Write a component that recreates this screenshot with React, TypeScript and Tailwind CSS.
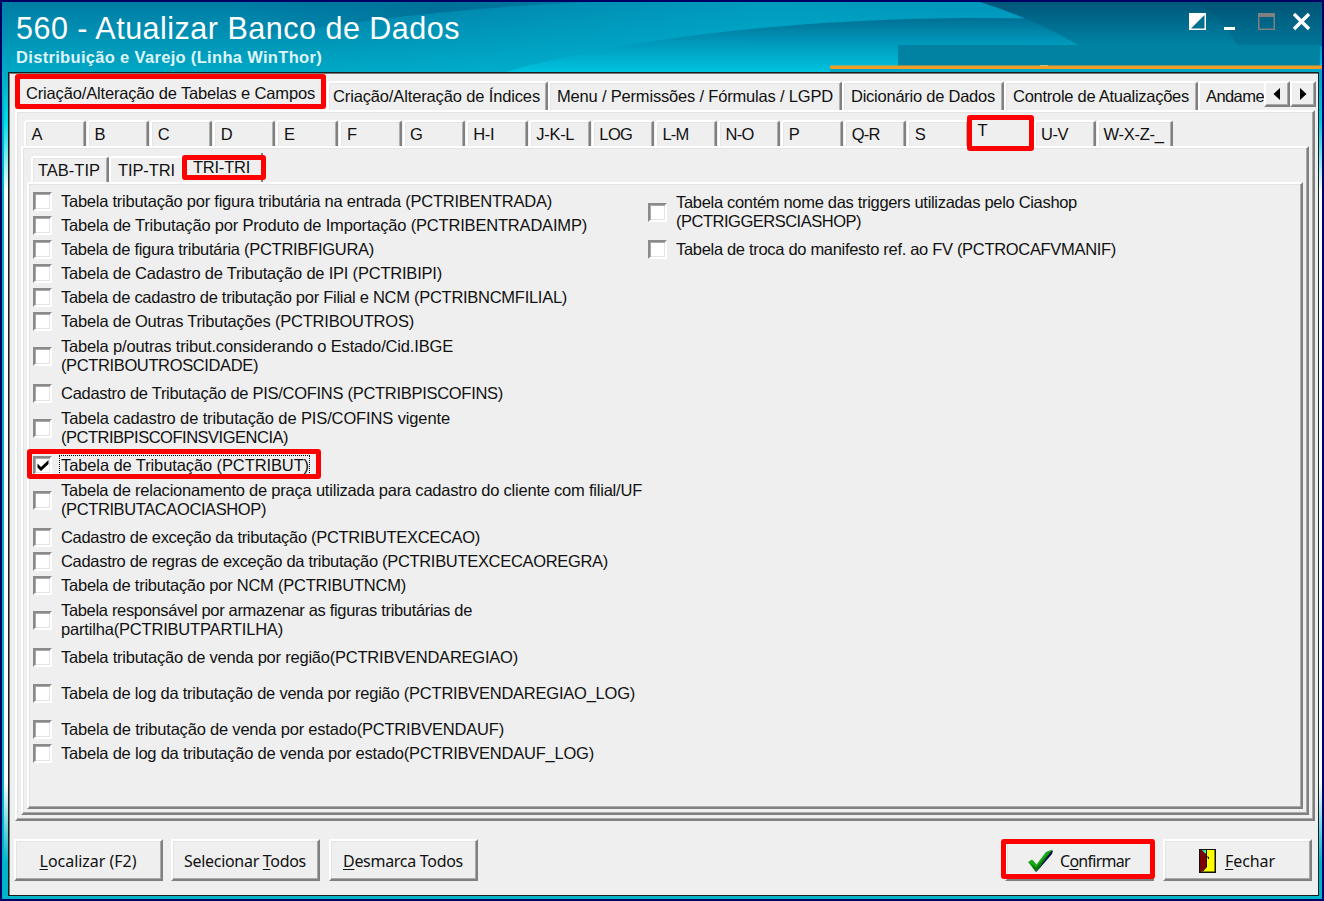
import { useLayoutEffect, useRef, useState, type ReactNode } from "react";

// Spreads a label over an exact width by adjusting its letter spacing.
const Label = ({ text, width, hot }: { text: string; width: number; hot?: number }) => {
  const ref = useRef<HTMLSpanElement>(null);
  const [spacing, setSpacing] = useState(0);

  useLayoutEffect(() => {
    if (ref.current && spacing === 0) {
      setSpacing((width - ref.current.getBoundingClientRect().width) / text.length);
    }
  }, [text, width, spacing]);

  return (
    <span ref={ref} className="inline-block whitespace-pre" style={{ letterSpacing: spacing }}>
      {hot === undefined ? (
        text
      ) : (
        <>
          {text.slice(0, hot)}
          <u className="underline decoration-1 underline-offset-2">{text[hot]}</u>
          {text.slice(hot + 1)}
        </>
      )}
    </span>
  );
};

const Highlight = ({ className }: { className: string }) => (
  <div className={`pointer-events-none absolute z-10 rounded-[3px] border-5 border-[#ff0000] ${className}`} />
);

interface TabItem {
  text: string;
  width: number;
  box: string;
}

const mainTabs: TabItem[] = [
  { text: "Criação/Alteração de Índices", width: 207, box: "w-[221px] pl-[4px]" },
  { text: "Menu / Permissões / Fórmulas / LGPD", width: 276, box: "w-[294px] pl-[7px]" },
  { text: "Dicionário de Dados", width: 144, box: "w-[162px] pl-[7px]" },
  { text: "Controle de Atualizações", width: 176, box: "w-[194px] pl-[7px]" },
];

const letterTabs: [string, number][] = [
  ["A", 11],
  ["B", 9],
  ["C", 10],
  ["D", 11],
  ["E", 9],
  ["F", 9],
  ["G", 11],
  ["H-I", 21],
  ["J-K-L", 38],
  ["LOG", 33],
  ["L-M", 26],
  ["N-O", 28],
  ["P", 11],
  ["Q-R", 28],
  ["S", 10],
  ["T", 9],
  ["U-V", 27],
];

interface Row {
  lines: [string, number][];
  tall?: boolean;
  checked?: boolean;
}

const leftRows: Row[] = [
  { lines: [["Tabela tributação por figura tributária na entrada (PCTRIBENTRADA)", 491]] },
  { lines: [["Tabela de Tributação por Produto de Importação (PCTRIBENTRADAIMP)", 526]] },
  { lines: [["Tabela de figura tributária (PCTRIBFIGURA)", 313]] },
  { lines: [["Tabela de Cadastro de Tributação de IPI (PCTRIBIPI)", 381]] },
  { lines: [["Tabela de cadastro de tributação por Filial e NCM (PCTRIBNCMFILIAL)", 506]] },
  { lines: [["Tabela de Outras Tributações (PCTRIBOUTROS)", 353]] },
  {
    lines: [
      ["Tabela p/outras tribut.considerando o Estado/Cid.IBGE", 392],
      ["(PCTRIBOUTROSCIDADE)", 197],
    ],
  },
  { lines: [["Cadastro de Tributação de PIS/COFINS (PCTRIBPISCOFINS)", 442]] },
  {
    lines: [
      ["Tabela cadastro de tributação de PIS/COFINS vigente", 389],
      ["(PCTRIBPISCOFINSVIGENCIA)", 227],
    ],
  },
  { lines: [["Tabela de Tributação (PCTRIBUT)", 248]], checked: true },
  {
    lines: [
      ["Tabela de relacionamento de praça utilizada para cadastro do cliente com filial/UF", 581],
      ["(PCTRIBUTACAOCIASHOP)", 205],
    ],
  },
  { lines: [["Cadastro de exceção da tributação (PCTRIBUTEXCECAO)", 419]] },
  { lines: [["Cadastro de regras de exceção da tributação (PCTRIBUTEXCECAOREGRA)", 547]] },
  { lines: [["Tabela de tributação por NCM (PCTRIBUTNCM)", 345]] },
  {
    lines: [
      ["Tabela responsável por armazenar as figuras tributárias de", 411],
      ["partilha(PCTRIBUTPARTILHA)", 222],
    ],
  },
  { lines: [["Tabela tributação de venda por região(PCTRIBVENDAREGIAO)", 457]] },
  { lines: [["Tabela de log da tributação de venda por região (PCTRIBVENDAREGIAO_LOG)", 574]], tall: true },
  { lines: [["Tabela de tributação de venda por estado(PCTRIBVENDAUF)", 443]] },
  { lines: [["Tabela de log da tributação de venda por estado(PCTRIBVENDAUF_LOG)", 533]] },
];

const rightRows: Row[] = [
  {
    lines: [
      ["Tabela contém nome das triggers utilizadas pelo Ciashop", 401],
      ["(PCTRIGGERSCIASHOP)", 185],
    ],
  },
  { lines: [["Tabela de troca do manifesto ref. ao FV (PCTROCAFVMANIF)", 440]] },
];

const raisedTab =
  "shrink-0 rounded-t-[3px] border-t-2 border-l-2 border-white border-r-2 border-r-[#808080] shadow-[inset_-1px_0_0_#b0b0b0,inset_1px_1px_0_#e6e6e6]";

const page =
  "flex flex-col border-t-2 border-l-2 border-white border-r-[2px] border-r-[#808080] border-b-[2px] border-b-[#808080] shadow-[inset_-1px_-1px_0_#a9a9a9,inset_1px_1px_0_#e3e3e3]";

const CheckRow = ({ row }: { row: Row }) => (
  <label
    className={`relative flex items-center ${
      row.lines.length > 1 ? "h-12 pb-[2px]" : row.tall ? "h-12" : "h-6"
    }`}
  >
    <span className="flex h-[19px] w-[19px] shrink-0 items-center justify-center border-2 border-[#8a8a8a] border-r-white border-b-white bg-white shadow-[inset_1px_1px_0_#a8a8a8,inset_-1px_-1px_0_#e4e4e4]">
      {row.checked && (
        <svg width="12" height="11" viewBox="0 0 12 11">
          <path d="M0.5 3.5 4 7 11.5 0V4L4 11 0.5 7.5Z" fill="#000" />
        </svg>
      )}
    </span>
    <span className="ml-[9px] leading-[19px]">
      {row.lines.map(([text, width]) => (
        <span key={text} className="block h-[19px]">
          <Label text={text} width={width} />
        </span>
      ))}
    </span>
    {row.checked && (
      <>
        <span className="absolute top-[2px] left-[26px] h-5 w-[251px] border-[1.5px] border-dotted border-black" />
        <Highlight className="-top-[4px] -left-[6px] h-[30px] w-[294px]" />
      </>
    )}
  </label>
);

const ScrollButton = ({ children }: { children: ReactNode }) => (
  <button className="flex h-[26px] w-[26px] items-center justify-center border-2 border-white border-r-[#808080] border-b-[#808080] bg-[#efefef] shadow-[inset_-1px_-1px_0_#a9a9a9]">
    {children}
  </button>
);

const FootButton = ({ children, className = "" }: { children: ReactNode; className?: string }) => (
  <button
    className={`relative flex h-[42px] w-[149px] items-center justify-center border-2 border-white border-r-[#808080] border-b-[#808080] bg-[#efefef] pt-[2px] pr-px font-['Noto_Sans',sans-serif] text-base shadow-[inset_-1px_-1px_0_#a9a9a9,inset_1px_1px_0_#e3e3e3] ${className}`}
  >
    {children}
  </button>
);

const HeaderArt = () => (
  <svg className="absolute inset-0" width="1320" height="70" viewBox="0 0 1320 70">
    <defs>
      <linearGradient id="base" x1="0" y1="0" x2="0" y2="1">
        <stop offset="0" stopColor="#007ca4" />
        <stop offset="1" stopColor="#00a9c6" />
      </linearGradient>
      <linearGradient id="corner" x1="0" y1="0" x2="1" y2="0">
        <stop offset="0" stopColor="#006a92" stopOpacity="0" />
        <stop offset="0.6" stopColor="#006a92" stopOpacity="0.8" />
        <stop offset="1" stopColor="#007ca4" stopOpacity="0.8" />
      </linearGradient>
      <linearGradient id="band" x1="0" y1="0" x2="1" y2="0">
        <stop offset="0" stopColor="#00b8d8" stopOpacity="0" />
        <stop offset="0.45" stopColor="#00b8d8" stopOpacity="0.5" />
        <stop offset="1" stopColor="#00b8d8" stopOpacity="0.35" />
      </linearGradient>
      <linearGradient id="wave" x1="0" y1="0" x2="0" y2="1">
        <stop offset="0" stopColor="#007094" />
        <stop offset="0.45" stopColor="#0097ba" />
        <stop offset="1" stopColor="#00c4e0" />
      </linearGradient>
      <linearGradient id="dark" x1="0" y1="0" x2="0" y2="1">
        <stop offset="0" stopColor="#005779" />
        <stop offset="1" stopColor="#0083a5" />
      </linearGradient>
    </defs>
    <rect width="1320" height="70" fill="url(#base)" />
    <rect x="300" width="1020" height="70" fill="url(#band)" />
    <path d="M230 40Q400 8 590 0H230Z" fill="url(#corner)" />
    <path d="M504 70C600 42 760 18 960 16Q1150 16 1320 30V70Z" fill="url(#wave)" />
    <path d="M978 0Q1030 16 1078 44H1320V0Z" fill="url(#dark)" />
    <path d="M1196 0Q1222 20 1236 44H1320V0Z" fill="#004f70" opacity="0.25" />
    <rect x="896" y="43" width="422" height="21" fill="#0082a3" />
    <rect x="1038" y="63" width="8" height="1" fill="#a9d6e0" />
    <rect x="828" y="67" width="492" height="3" fill="#00829f" opacity="0.4" />
    <rect x="828" y="63.5" width="492" height="3.5" fill="#ef9d27" />
  </svg>
);

export default function App() {
  return (
    <div className="h-[901px] w-[1324px] overflow-hidden bg-[#000064] p-[2px] font-['Liberation_Sans',Arial,sans-serif] text-[16.5px] text-[#111]">
      <div className="flex h-full flex-col bg-[#00b4ca]">
        <header className="relative flex h-[70px] shrink-0 justify-between overflow-hidden">
          <HeaderArt />
          <div className="relative pl-[14px] text-white">
            <h1 className="mt-[9px] text-[30.5px] leading-[34px]">
              <Label text="560 - Atualizar Banco de Dados" width={444} />
            </h1>
            <p className="mt-[3px] text-[16.5px] leading-[19px] font-bold text-[#dff4f8]">
              <Label text="Distribuição e Varejo (Linha WinThor)" width={306} />
            </p>
          </div>
          <div className="relative mt-[11px] mr-[12px] flex h-[18px] gap-[18px]">
            <svg width="17" height="18" viewBox="0 0 17 18">
              <rect width="17" height="17" fill="#fff" />
              <path d="M15.5 2V15.5H2Z" fill="#00708f" />
            </svg>
            <svg width="16" height="18" viewBox="0 0 16 18">
              <rect x="0" y="14" width="11" height="3" fill="#fff" />
            </svg>
            <svg width="17" height="18" viewBox="0 0 17 18">
              <path d="M0.75 0.75H16.25V16.25H0.75Z" fill="none" stroke="#808080" strokeWidth="1.5" />
              <path d="M0 0H17V4H0Z" fill="#808080" />
            </svg>
            <svg width="17" height="18" viewBox="0 0 17 18">
              <path d="M1 1 16 16M16 1 1 16" stroke="#fff" strokeWidth="3.4" />
            </svg>
          </div>
        </header>

        <div className="flex h-[824px] shrink-0">
          <div className="w-[2px] bg-[#00b4c8]" />
          <div className="w-[4px] bg-[linear-gradient(#00a5c2,#00dcea_50px,#fff_120px,#fff_710px,#00b4ca_790px)]" />
          <main className="flex w-[1311px] flex-col border border-[#1c1c1c] bg-[#efefef] shadow-[inset_1px_1px_0_#777]">
            <nav className="relative flex h-[37px] shrink-0 pl-[6px]">
              <div className="relative w-[312px] shrink-0 pt-[10px] pl-[11px] leading-5">
                <Label text="Criação/Alteração de Tabelas e Campos" width={289} />
                <Highlight className="top-px left-0 h-[35px] w-[311px]" />
              </div>
              {mainTabs.map((tab) => (
                <div key={tab.text} className={`${raisedTab} ${tab.box} mt-2 pt-[3px] leading-5`}>
                  <Label text={tab.text} width={tab.width} />
                </div>
              ))}
              <div className="mt-2 w-[66px] overflow-hidden rounded-tl-[3px] border-t-2 border-l-2 border-white pt-[3px] pl-[6px] leading-5">
                <Label text="Andame" width={58} />
              </div>
              <div className="mt-[8px] flex">
                <ScrollButton>
                  <svg width="8" height="12" viewBox="0 0 8 12">
                    <path d="M7 0V12L0.5 6Z" fill="#000" />
                  </svg>
                </ScrollButton>
                <ScrollButton>
                  <svg width="8" height="12" viewBox="0 0 8 12">
                    <path d="M1 0V12L7.5 6Z" fill="#000" />
                  </svg>
                </ScrollButton>
              </div>
            </nav>

            <section className={`${page} ml-[6px] h-[711px] w-[1300px] shrink-0`}>
              <nav className="flex h-[34px] shrink-0 pt-[8px] pl-[7px]">
                {letterTabs.map(([text, width]) =>
                  text === "T" ? (
                    <div key={text} className="relative w-[63.1px] shrink-0 pl-[7px] leading-5">
                      <Label text={text} width={width} />
                      <Highlight className="-top-[5px] -left-[3px] h-[36px] w-[67px]" />
                    </div>
                  ) : (
                    <div key={text} className={`${raisedTab} mr-px w-[62.1px] pt-[2px] pl-[5.500px] leading-5`}>
                      <Label text={text} width={width} />
                    </div>
                  ),
                )}
                <div className={`${raisedTab} w-[76px] pt-[2px] pl-[5px] leading-5`}>
                  <Label text="W-X-Z-_" width={60} />
                </div>
              </nav>

              <section className={`${page} ml-[4px] h-[669px] w-[1288px] shrink-0`}>
                <nav className="flex h-[34px] shrink-0 pt-[8px] pl-[8px]">
                  <div className={`${raisedTab} w-[78px] pt-[2px] pl-[5px] leading-5`}>
                    <Label text="TAB-TIP" width={62} />
                  </div>
                  <div className="w-[74px] rounded-t-[3px] border-t-2 border-l-2 border-white pt-[2px] pl-[7px] leading-5">
                    <Label text="TIP-TRI" width={57} />
                  </div>
                  <div className="relative -mt-[3px] w-[80px] border-r-2 border-[#808080] pt-[4px] pl-[10px] leading-5">
                    <Label text="TRI-TRI" width={57} />
                    <Highlight className="top-[2px] -left-px h-[25px] w-[84px]" />
                  </div>
                </nav>

                <section className={`${page} ml-[4px] h-[627px] w-[1276px] shrink-0`}>
                  <div className="flex pt-[5px] pl-[4px]">
                    <div className="w-[615px]">
                      {leftRows.map((row) => (
                        <CheckRow key={row.lines[0][0]} row={row} />
                      ))}
                    </div>
                    <div>
                      {rightRows.map((row) => (
                        <CheckRow key={row.lines[0][0]} row={row} />
                      ))}
                    </div>
                  </div>
                </section>
              </section>
            </section>

            <footer className="flex pt-[18px] pl-[5px]">
              <FootButton>
                <Label text="Localizar (F2)" width={97} hot={0} />
              </FootButton>
              <FootButton className="ml-[8px]">
                <Label text="Selecionar Todos" width={122} hot={11} />
              </FootButton>
              <FootButton className="ml-[9px]">
                <Label text="Desmarca Todos" width={120} hot={0} />
              </FootButton>
              <FootButton className="ml-[527px] gap-[6px]">
                <svg width="26" height="24" viewBox="0 0 26 24">
                  <path d="M1.500 14 5 12 9 17 19 3 25 1.500 24 5 11 20 8 23Z" fill="#0a0a50" />
                  <path d="M0 13 4 10.500 8.500 15.500 18 3 24.500 0.500 10 20 7.500 22Z" fill="#18a818" />
                  <path d="M2 14 8 18.500 23 1.500 10 20.500 7.500 22.500Z" fill="#067a06" />
                </svg>
                <Label text="Confirmar" width={70} hot={1} />
                <Highlight className="-top-[2px] -left-[6px] h-[40px] w-[154px]" />
              </FootButton>
              <FootButton className="ml-[9px] gap-[9px]">
                <svg width="17" height="24" viewBox="0 0 17 24">
                  <rect width="17" height="24" fill="#111" />
                  <path d="M2 1H15.500V22.500H2Z" fill="#ffff00" />
                  <path d="M1 1H3L7.500 5V18L3 22.500H1Z" fill="#7b0000" />
                  <path d="M3 1H6.500V5Z" fill="#00dfe8" />
                  <path d="M7.500 1V18L3.500 22.500" fill="none" stroke="#111" />
                  <path d="M8 8H9.500V10" fill="none" stroke="#111" />
                </svg>
                <Label text="Fechar" width={50} hot={0} />
              </FootButton>
            </footer>
          </main>
          <div className="w-[3px] bg-[linear-gradient(#00a5c2,#00c8dc_50px,#f4ffff_120px,#f4ffff_710px,#00b4ca_790px)]" />
        </div>
      </div>
    </div>
  );
}
